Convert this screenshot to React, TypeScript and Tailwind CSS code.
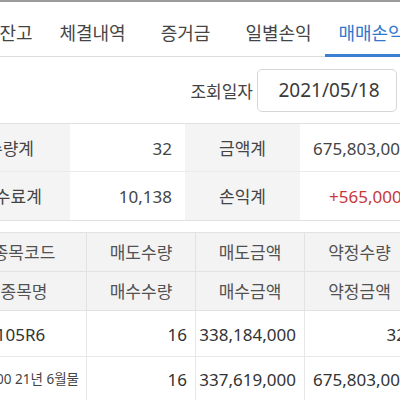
import React from "react";

const font = { fontFamily: '"Noto Sans", "Noto Sans CJK KR", sans-serif' };

export default function App() {
  const tabs = ["평가잔고", "체결내역", "증거금", "일별손익", "매매손익"];
  return (
    <div className="w-[400px] h-[400px] overflow-hidden bg-white text-[#444]" style={font}>
      <div className="h-[2px] bg-[#9c9c9c]" />
      {/* Tabs */}
      <div className="relative h-[55px] border-b border-[#dcdcdc]">
        <div className="flex ml-[-47px] h-full">
          {tabs.map((t, i) => (
            <div
              key={t}
              className={
                "relative w-[93px] shrink-0 flex items-center justify-center text-[18px] whitespace-nowrap " +
                (i === 4 ? "text-[#2f78cc]" : "text-[#454545]")
              }
            >
              <span className="relative top-[4px]">{t}</span>
              {i === 4 && <div className="absolute left-0 right-0 bottom-[-1px] h-[3px] bg-[#3a7fd2]" />}
            </div>
          ))}
        </div>
      </div>
      {/* Date row */}
      <div className="flex items-center justify-end h-[66px] pr-[3px] pt-[1px]">
        <span className="text-[17px] text-[#444] mr-[4px] relative top-[1px]">조회일자</span>
        <div className="w-[140px] h-[43px] border border-[#d6d6d6] rounded-[5px] flex items-center justify-center text-[19px] text-[#3a3a3a] pl-[4px]">
          2021/05/18
        </div>
      </div>
      {/* Summary */}
      <div className="border-t border-b border-[#e0e0e0]">
        <div className="ml-[-49px] w-[463px]">
          {[
            ["수량계", "32", "금액계", "675,803,000", false],
            ["수수료계", "10,138", "손익계", "+565,000", true],
          ].map((r, i) => (
            <div
              key={i}
              className={"grid grid-cols-[119px_115px_115px_114px] h-[48px] text-[17px] " + (i === 0 ? "border-b border-[#ebebeb]" : "")}
            >
              <div className="bg-[#f4f4f4] flex items-center justify-center whitespace-nowrap pt-[2px]">{r[0] as string}</div>
              <div className="flex items-center justify-end pr-[13px] pt-[2px]">{r[1] as string}</div>
              <div className="bg-[#f4f4f4] flex items-center justify-center pt-[2px]">{r[2] as string}</div>
              <div className={"flex items-center whitespace-nowrap pt-[2px] " + (r[4] ? "text-[#c8383a] pl-[29px]" : "pl-[13px]")}>
                {r[3] as string}
              </div>
            </div>
          ))}
        </div>
      </div>
      {/* Detail table */}
      <div className="mt-[11px] border-t border-[#e2e2e2]">
        <div className="ml-[-40px] w-[470px]">
          {[
            ["종목코드", "매도수량", "매도금액", "약정수량"],
            ["종목명", "매수수량", "매수금액", "약정금액"],
          ].map((r, i) => (
            <div key={i} className="grid grid-cols-[127px_109px_109px_125px] h-[39px] bg-[#f3f3f3] border-b border-[#e2e2e2] text-[17px] text-[#525252]">
              {r.map((c, j) => (
                <div key={j} className={"flex items-center justify-center whitespace-nowrap pt-[2px] " + (j < 3 ? "border-r border-[#e2e2e2]" : "")}>
                  <span className={j === 0 ? "ml-[2px]" : j === 3 ? "mr-[16px]" : ""}>{c}</span>
                </div>
              ))}
            </div>
          ))}
          <div className="grid grid-cols-[127px_109px_109px_125px] h-[46px] border-b border-[#e8e8e8] text-[17px] text-[#333]">
            <div className="flex items-center pl-[25px] border-r border-[#e8e8e8] overflow-hidden whitespace-nowrap pt-[2px]">
              <span>A105R6</span>
            </div>
            <div className="flex items-center justify-end pr-[8px] border-r border-[#e8e8e8] pt-[2px]">16</div>
            <div className="flex items-center justify-end pr-[8px] border-r border-[#e8e8e8] pt-[2px]">338,184,000</div>
            <div className="flex items-center justify-end pr-[24px] pt-[2px]">32</div>
          </div>
          <div className="grid grid-cols-[127px_109px_109px_125px] h-[44px] border-b border-[#e8e8e8] text-[17px] text-[#333]">
            <div className="flex items-center justify-end pr-[7px] border-r border-[#e8e8e8] overflow-hidden whitespace-nowrap text-[13.5px] text-[#444] pt-[2px]">
              <span>미니코스피200 21년 6월물</span>
            </div>
            <div className="flex items-center justify-end pr-[8px] border-r border-[#e8e8e8] pt-[2px]">16</div>
            <div className="flex items-center justify-end pr-[8px] border-r border-[#e8e8e8] pt-[2px]">337,619,000</div>
            <div className="flex items-center pl-[8px] whitespace-nowrap pt-[2px]">675,803,000</div>
          </div>
        </div>
      </div>
    </div>
  );
}
